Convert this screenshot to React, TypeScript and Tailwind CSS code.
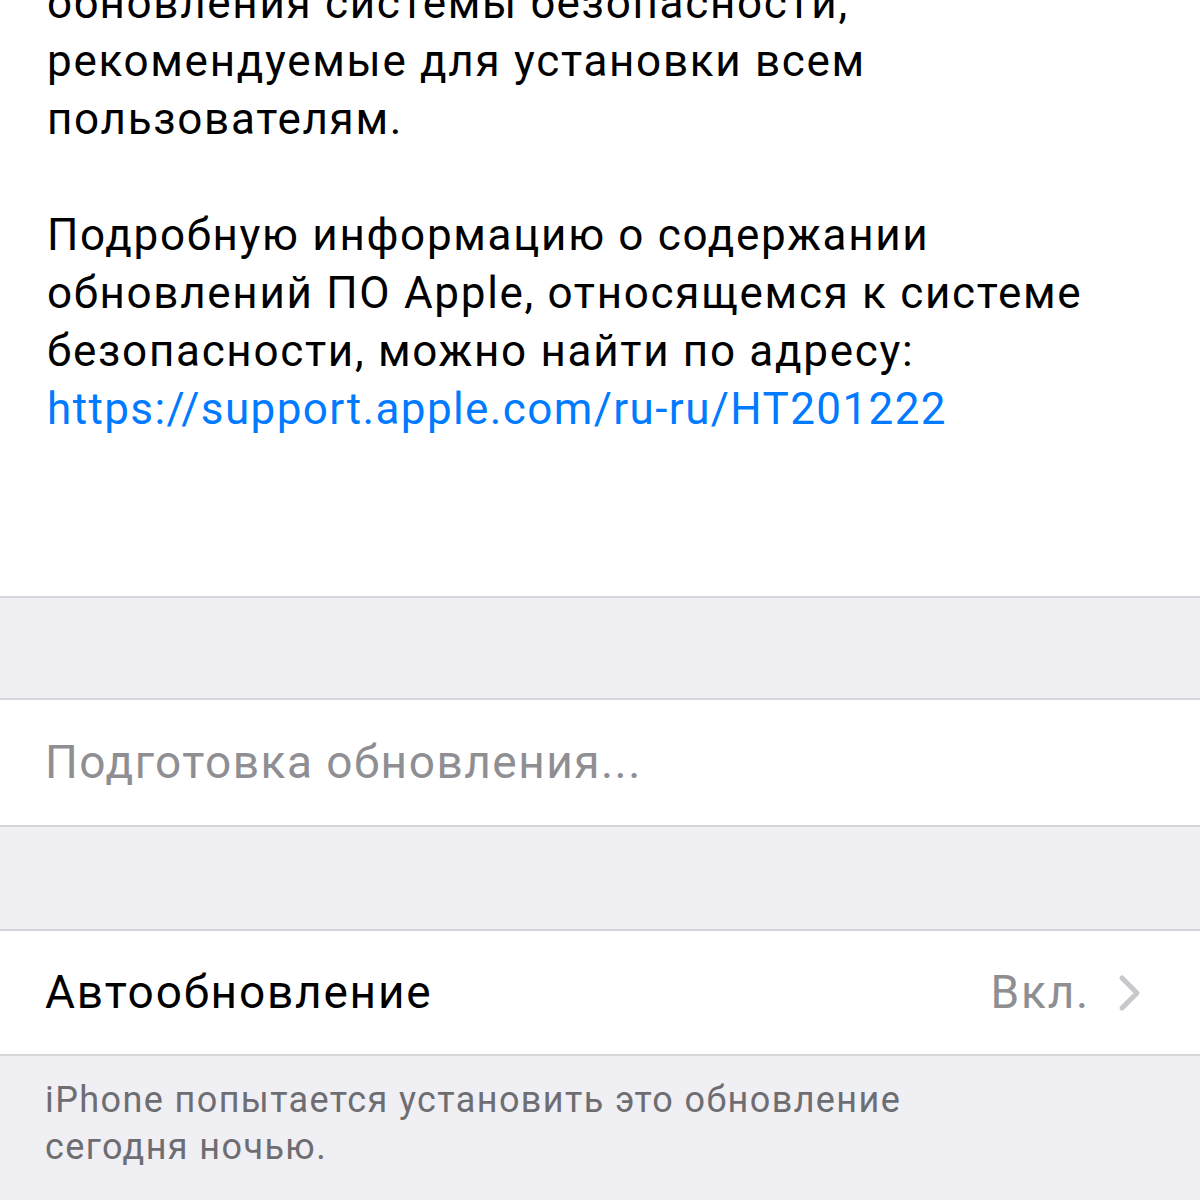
export default function App() {
  return (
    <div className="w-[1200px] h-[1200px] overflow-hidden bg-[#efeff4]" style={{ fontFamily: "Roboto, 'Noto Sans', sans-serif" }}>
      <div className="bg-white h-[598px] border-b-[2px] border-[#d6d5da] overflow-hidden">
        <div className="-mt-[26px] pl-[47px] text-[44px] leading-[58px] tracking-[1.7px] text-black">
          <p>обновления системы безопасности,<br />рекомендуемые для установки всем<br />пользователям.</p>
          <p className="mt-[58px]">
            Подробную информацию о содержании<br />обновлений ПО Apple, относящемся к системе<br />безопасности, можно найти по адресу:<br />
            <span className="text-[#007aff] tracking-[1.4px]">https://support.apple.com/ru-ru/HT201222</span>
          </p>
        </div>
      </div>
      <div className="h-[100px]" />
      <div className="bg-white h-[129px] border-y-[2px] border-[#d6d5da] flex items-center pl-[45px] text-[46px] tracking-[1.5px] text-[#8e8e93]">
        Подготовка обновления...
      </div>
      <div className="h-[102px]" />
      <div className="bg-white h-[127px] border-y-[2px] border-[#d6d5da] flex items-center pl-[45px] pr-[58px] text-[46px] tracking-[1.8px]">
        <span className="text-black flex-1">Автообновление</span>
        <span className="text-[#8e8e93]">Вкл.</span>
        <svg width="24" height="38" viewBox="0 0 24 38" className="ml-[28px]">
          <path d="M4 4 L19 19 L4 34" stroke="#c7c7cc" strokeWidth="5" fill="none" strokeLinecap="round" strokeLinejoin="round" />
        </svg>
      </div>
      <div className="pl-[45px] pt-[21px] text-[36px] leading-[47px] tracking-[1.4px] text-[#6d6d72]">
        iPhone попытается установить это обновление<br />сегодня ночью.
      </div>
    </div>
  );
}
